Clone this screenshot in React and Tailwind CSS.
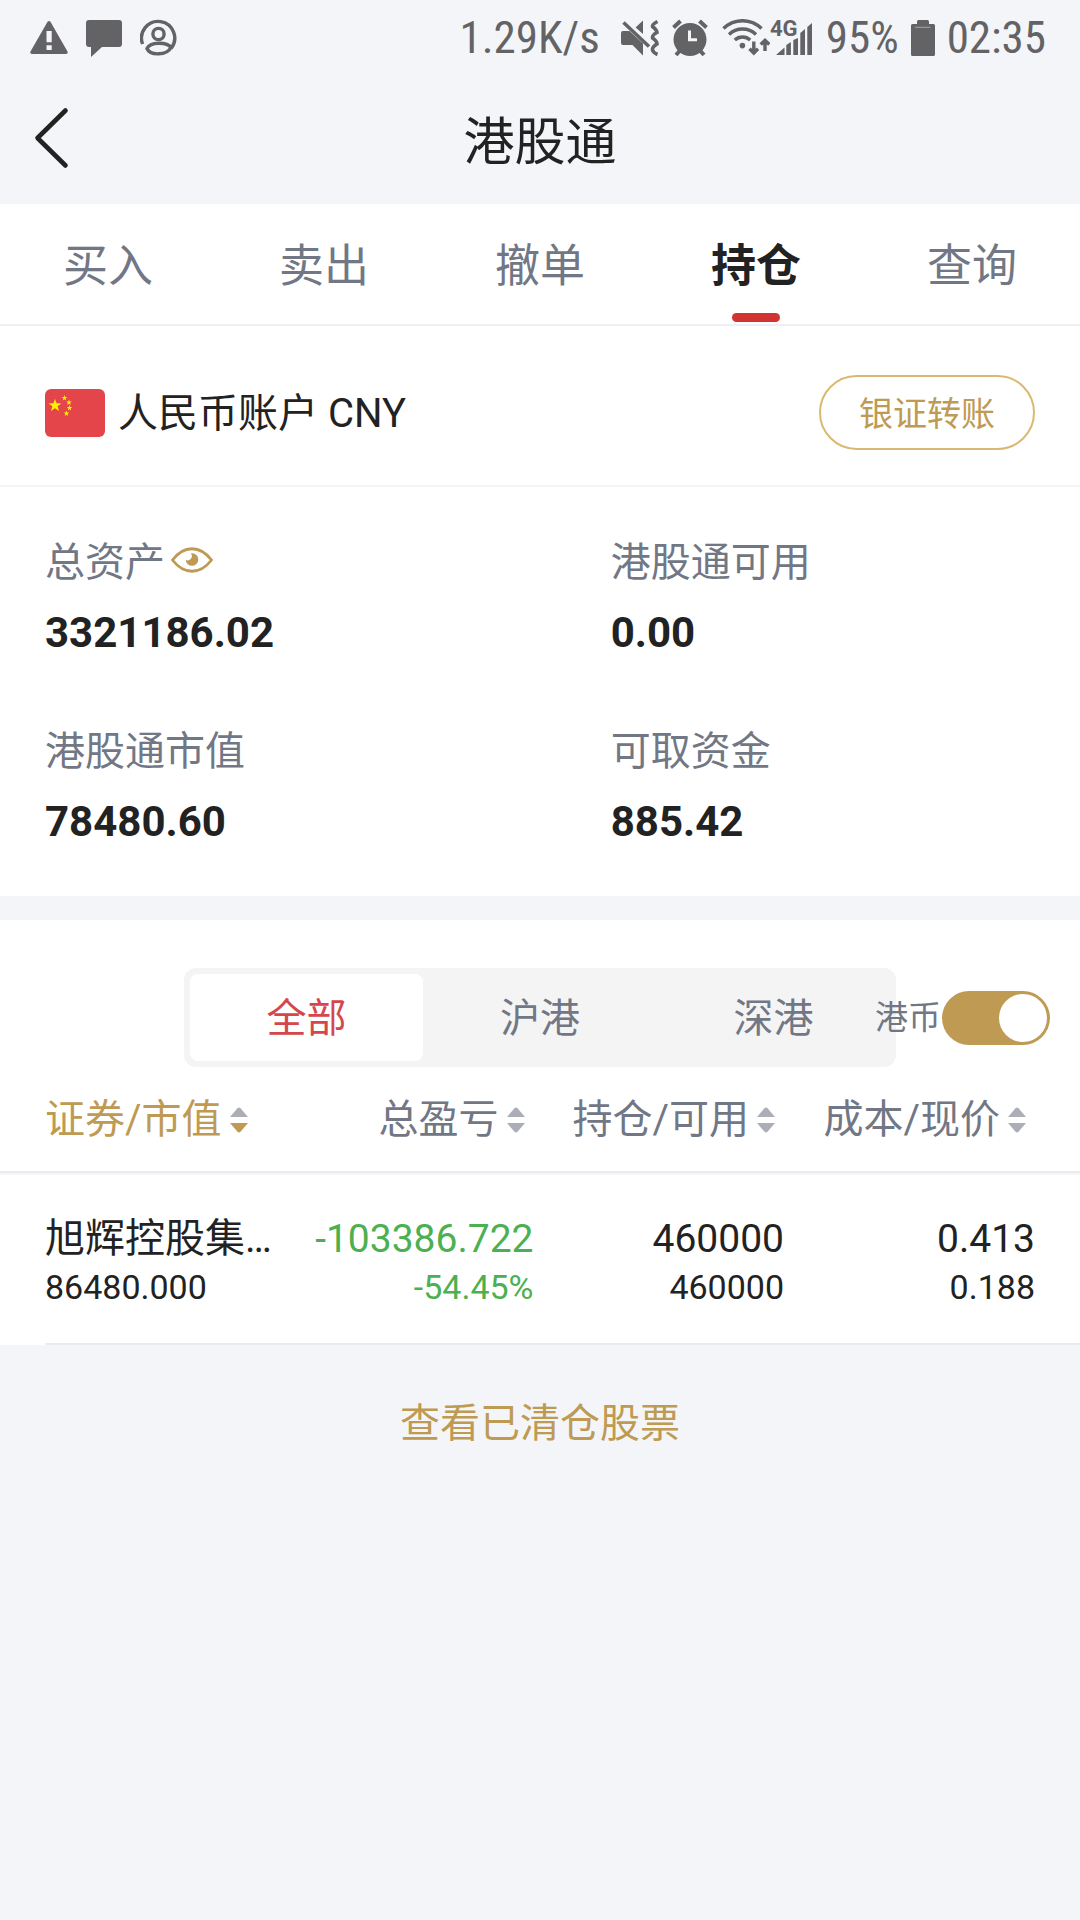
import { useState } from 'react';
import clsx from 'clsx';

const TABS = ['买入', '卖出', '撤单', '持仓', '查询'];
const MARKETS = ['全部', '沪港', '深港'];

const STATS = [
  { label: '总资产', value: '3321186.02', eye: true },
  { label: '港股通可用', value: '0.00' },
  { label: '港股通市值', value: '78480.60' },
  { label: '可取资金', value: '885.42' },
];

const COLUMNS = [
  { label: '证券/市值', width: 'w-[26.2%]', sorted: true },
  { label: '总盈亏', width: 'w-[23.2%]' },
  { label: '持仓/可用', width: 'w-[23.2%]' },
  { label: '成本/现价', width: 'w-[27.4%]' },
];

const HOLDINGS = [
  {
    name: '旭辉控股集…',
    marketValue: '86480.000',
    profit: '-103386.722',
    profitRate: '-54.45%',
    position: '460000',
    available: '460000',
    cost: '0.413',
    price: '0.188',
  },
];

function starPoints(cx, cy, r) {
  return Array.from({ length: 10 }, (_, i) => {
    const radius = i % 2 ? r * 0.4 : r;
    const angle = (Math.PI / 5) * i - Math.PI / 2;
    return `${cx + radius * Math.cos(angle)},${cy + radius * Math.sin(angle)}`;
  }).join(' ');
}

function WarningIcon() {
  return (
    <svg className="h-[38px] w-[38px]" viewBox="0 0 38 38" fill="currentColor">
      <path d="M17.4 3q1.6-2 3.2 0L37.5 32.5q.8 2.3-1.5 2.5H2q-2.3-.2-1.5-2.5z" />
      <path fill="#f4f5f9" d="M16.5 12h5.2v11.2h-5.2zM16.5 26.2h5.2v4.8h-5.2z" />
    </svg>
  );
}

function ChatIcon() {
  return (
    <svg className="h-[38px] w-[36px]" viewBox="0 0 36 38" fill="currentColor">
      <path d="M3 1h30q3 0 3 3v21q0 3-3 3H16L5 38V28H3q-3 0-3-3V4q0-3 3-3z" />
    </svg>
  );
}

function PersonIcon() {
  return (
    <svg className="h-[38px] w-[38px]" viewBox="0 0 38 38" fill="none" stroke="currentColor" strokeWidth="3.4">
      <path d="M2.6 25A16.6 16.6 0 1 1 31 29.5" />
      <circle cx="18.5" cy="15" r="5.6" />
      <path d="M7 29.5C10 22.6 27 22.6 31 28.5C27 36.5 10 37 7 29.5z" />
    </svg>
  );
}

function MuteVibrateIcon() {
  return (
    <svg className="h-[38px] w-[39px]" viewBox="0 0 39 38" fill="currentColor">
      <path d="M3 12h6.5L23 24.5V36.5L12.5 26H3q-2 0-2-2V14q0-2 2-2z" />
      <path d="M15.5 8.5L23 1.5V15z" />
      <path d="M8 3.500L31 25.200" stroke="#f4f5f9" strokeWidth="2.500" />
      <path d="M3.500 3.500L29 27.500" stroke="currentColor" strokeWidth="3.600" />
      <path
        d="M37.500 2.500Q32 5.500 32.500 7.500Q37 11 37 13.500Q32 16 32.500 19Q37 22 37 25Q32 28 32.500 31Q33.500 34 37.500 35.500"
        fill="none"
        stroke="currentColor"
        strokeWidth="3.600"
      />
    </svg>
  );
}

function AlarmIcon() {
  return (
    <svg className="h-[38px] w-[36px]" viewBox="0 0 36 38" fill="none" stroke="currentColor" strokeWidth="4">
      <circle cx="18" cy="20.5" r="16.5" fill="currentColor" stroke="none" />
      <path d="M1.5 8.5L8.5 2M27.5 2L34.5 8.5M4 36L8 31.5M32 36L28 31.5" />
      <path d="M17.5 11.5V20.8H25" stroke="#f4f5f9" strokeWidth="3" />
    </svg>
  );
}

function WifiIcon() {
  return (
    <svg className="h-[38px] w-[48px]" viewBox="0 0 48 38" fill="none" stroke="currentColor" strokeWidth="3.4">
      <path d="M1.5 9.5A27 27 0 0 1 39.5 9.5M7 15.5A19.5 19.5 0 0 1 34 15.5M12.8 21A11.5 11.5 0 0 1 28.2 21" />
      <circle cx="20.4" cy="26.6" r="2.8" fill="currentColor" stroke="none" />
      <path d="M31.8 22.5V34M27.5 29.8L31.8 34L36 29.8M43 32V21.5M38.7 25.5L43 21.3L47.3 25.5" />
    </svg>
  );
}

function SignalIcon() {
  return (
    <svg className="h-[50px] w-[42px]" viewBox="0 -6 42 50" fill="currentColor">
      <path d="M6 36L14.5 28.5V36zM16.3 26L20.9 23V36h-4.6zM23.3 21l4.7-2V36h-4.7zM30.3 14l4.7-4V36h-4.7zM37.3 8L42 4V36h-4.7z" />
      <text x="0" y="17" fontSize="22" fontWeight="700" fontFamily="Roboto, sans-serif">
        4G
      </text>
    </svg>
  );
}

function BatteryIcon() {
  return (
    <svg className="h-[38px] w-[24px]" viewBox="0 0 24 38" fill="currentColor">
      <path d="M7.5 1h9q1.5 0 1.5 1.5V5h4.5q1.5 0 1.5 1.5V35.5q0 1.5-1.5 1.5h-21Q0 37 0 35.5V6.5Q0 5 1.5 5H6V2.5Q6 1 7.5 1z" />
      <path d="M4 8.3H19.5" stroke="#a3a4a7" />
    </svg>
  );
}

function FlagIcon() {
  return (
    <svg className="h-[48px] w-[60px] rounded-md" viewBox="0 0 60 48">
      <rect width="60" height="48" fill="#e4454b" />
      <g fill="#fff000">
        <polygon points={starPoints(10, 16.5, 6.8)} />
        <polygon points={starPoints(19.5, 9, 3)} />
        <polygon points={starPoints(24, 13.5, 3)} />
        <polygon points={starPoints(24.5, 19, 3)} />
        <polygon points={starPoints(21.5, 24.5, 3)} />
      </g>
    </svg>
  );
}

function EyeIcon() {
  return (
    <svg className="h-[26px] w-[42px]" viewBox="0 0 42 26">
      <path d="M1.5 13C13-2 29-2 40.5 13C29 28 13 28 1.5 13z" fill="none" stroke="#be9a52" strokeWidth="2.8" />
      <circle cx="21" cy="12.5" r="6.3" fill="#be9a52" />
      <circle cx="16.5" cy="9" r="4.4" fill="#fff" />
    </svg>
  );
}

function SortIcon({ active }) {
  return (
    <svg className="h-[26px] w-[18px]" viewBox="0 0 18 26">
      <path d="M0 10L7.5 1.2q1.5-1.5 3 0L18 10z" fill="#abadb7" />
      <path d="M0 16h18L10.5 24.8q-1.5 1.5-3 0z" fill={active ? '#be9a52' : '#abadb7'} />
    </svg>
  );
}

function StatusBar() {
  return (
    <div className="flex h-[76px] items-center justify-between pl-[30px] pr-[34px] text-[#636365]">
      <div className="flex items-center gap-[18px]">
        <WarningIcon />
        <ChatIcon />
        <PersonIcon />
      </div>
      <div className="flex items-center font-['Roboto_Condensed',Roboto,sans-serif] text-[45px] leading-[52px]">
        <span className="mr-[20px]">1.29K/s</span>
        <span className="mr-[13px]">
          <MuteVibrateIcon />
        </span>
        <span className="mr-[14px]">
          <AlarmIcon />
        </span>
        <WifiIcon />
        <SignalIcon />
        <span className="ml-[14px] mr-[12px]">95%</span>
        <BatteryIcon />
        <span className="ml-[12px]">02:35</span>
      </div>
    </div>
  );
}

export default function App() {
  const [tab, setTab] = useState('持仓');
  const [market, setMarket] = useState('全部');
  const [inHkd, setInHkd] = useState(true);

  return (
    <div className="min-h-screen bg-[#f4f5f9] font-[Roboto,'Noto_Sans_CJK_SC',sans-serif] text-[40px] leading-[52px] text-[#222222]">
      <StatusBar />

      <header className="grid h-[128px] grid-cols-[1fr_auto_1fr] items-center">
        <button type="button" aria-label="返回" className="justify-self-start pb-1 pl-[34px]">
          <svg className="h-[62px] w-[36px]" viewBox="0 0 36 62" fill="none" stroke="#222" strokeWidth="4.6" strokeLinecap="round" strokeLinejoin="round">
            <path d="M31.5 3.5L3.5 31L31.5 58.5" />
          </svg>
        </button>
        <h1 className="pt-[6px] text-[51px] leading-[64px]">港股通</h1>
      </header>

      <nav className="grid grid-cols-5 border-b-2 border-[#eeeff2] bg-white">
        {TABS.map((item) => (
          <button
            key={item}
            type="button"
            onClick={() => setTab(item)}
            className={clsx(
              'flex h-[120px] flex-col items-center justify-end gap-[16px] pb-[2px] text-[45px] leading-[60px]',
              item === tab ? 'font-bold' : 'text-[#717784]'
            )}
          >
            {item}
            <span className={clsx('h-[9px] w-[48px] rounded-full', item === tab && 'bg-[#d13232]')} />
          </button>
        ))}
      </nav>

      <section className="bg-white">
        <div className="flex h-[161px] items-center justify-between border-b-2 border-[#f3f4f6] px-[45px] pb-[18px] pt-[32px]">
          <div className="flex items-center gap-[13px]">
            <FlagIcon />
            <h2 className="pt-[3px]">人民币账户 CNY</h2>
          </div>
          <button
            type="button"
            className="h-[75px] w-[216px] rounded-full border-2 border-[#d9b96f] pt-[3px] text-[34px] leading-[44px] text-[#be9a52]"
          >
            银证转账
          </button>
        </div>

        <dl className="grid grid-cols-[4fr_3fr] gap-y-[67px] px-[45px] pb-[48px] pt-[50px]">
          {STATS.map(({ label, value, eye }) => (
            <div key={label} className="flex flex-col gap-[18px]">
              <dt className="flex h-[52px] items-center gap-[6px] text-[#717784]">
                {label}
                {eye && (
                  <button type="button" aria-label="隐藏金额" className="pb-[6px]">
                    <EyeIcon />
                  </button>
                )}
              </dt>
              <dd className="text-[42px] font-bold">{value}</dd>
            </div>
          ))}
        </dl>
      </section>

      <section className="mt-[24px] bg-white pt-[48px]">
        <div className="relative flex justify-center">
          <div className="flex w-[66%] rounded-xl bg-[#f4f4f4] p-[6px]">
            {MARKETS.map((item) => (
              <button
                key={item}
                type="button"
                onClick={() => setMarket(item)}
                className={clsx(
                  'h-[87px] flex-1 rounded-lg pt-[3px]',
                  item === market ? 'bg-white text-[#d4474d]' : 'text-[#717784]'
                )}
              >
                {item}
              </button>
            ))}
          </div>
          {/* Currency switch sits over the end of the market tabs */}
          <label className="absolute inset-y-0 right-[30px] flex items-center gap-px text-[33px] leading-[44px] text-[#717784]">
            港币
            <input
              type="checkbox"
              role="switch"
              checked={inHkd}
              onChange={(e) => setInHkd(e.target.checked)}
              className="flex h-[54px] w-[108px] appearance-none items-center rounded-full bg-[#c9cbd2] p-[3px] before:h-[48px] before:w-[48px] before:rounded-full before:bg-white checked:justify-end checked:bg-[#be9a52]"
            />
          </label>
        </div>

        <table className="w-full table-fixed border-separate border-spacing-0">
          <thead>
            <tr>
              {COLUMNS.map(({ label, width, sorted }) => (
                <th
                  key={label}
                  scope="col"
                  className={clsx(
                    'h-[106px] border-b-2 border-[#e9ebee] p-0 pr-[9px] text-right font-normal first:pl-[45px] first:text-left last:pr-[54px]',
                    width,
                    sorted ? 'text-[#be9a52]' : 'text-[#717784]'
                  )}
                >
                  <button type="button" className="inline-flex items-center gap-[8px] whitespace-nowrap align-middle">
                    {label}
                    <SortIcon active={sorted} />
                  </button>
                </th>
              ))}
            </tr>
          </thead>
          <tbody>
            {HOLDINGS.map((row) => (
              <tr
                key={row.name}
                className="text-right text-[39px] leading-[48px] [&>td]:border-t-2 [&>td]:border-[#f4f5f9] [&>td]:pb-[32px] [&>td]:pt-[40px]"
              >
                <td className="pl-[45px] text-left">
                  <div className="whitespace-nowrap text-[40px]">{row.name}</div>
                  <div className="text-[34px]">{row.marketValue}</div>
                </td>
                <td className="text-[#4cb050]">
                  <div>{row.profit}</div>
                  <div className="text-[34px]">{row.profitRate}</div>
                </td>
                <td>
                  <div>{row.position}</div>
                  <div className="text-[34px]">{row.available}</div>
                </td>
                <td className="pr-[45px]">
                  <div>{row.cost}</div>
                  <div className="text-[34px]">{row.price}</div>
                </td>
              </tr>
            ))}
          </tbody>
        </table>
        <div className="ml-[45px] h-[2px] bg-[#e9ebee]" />
      </section>

      <div className="flex justify-center pt-[53px]">
        <a href="#closed" className="text-[#be9a52]">
          查看已清仓股票
        </a>
      </div>
    </div>
  );
}
